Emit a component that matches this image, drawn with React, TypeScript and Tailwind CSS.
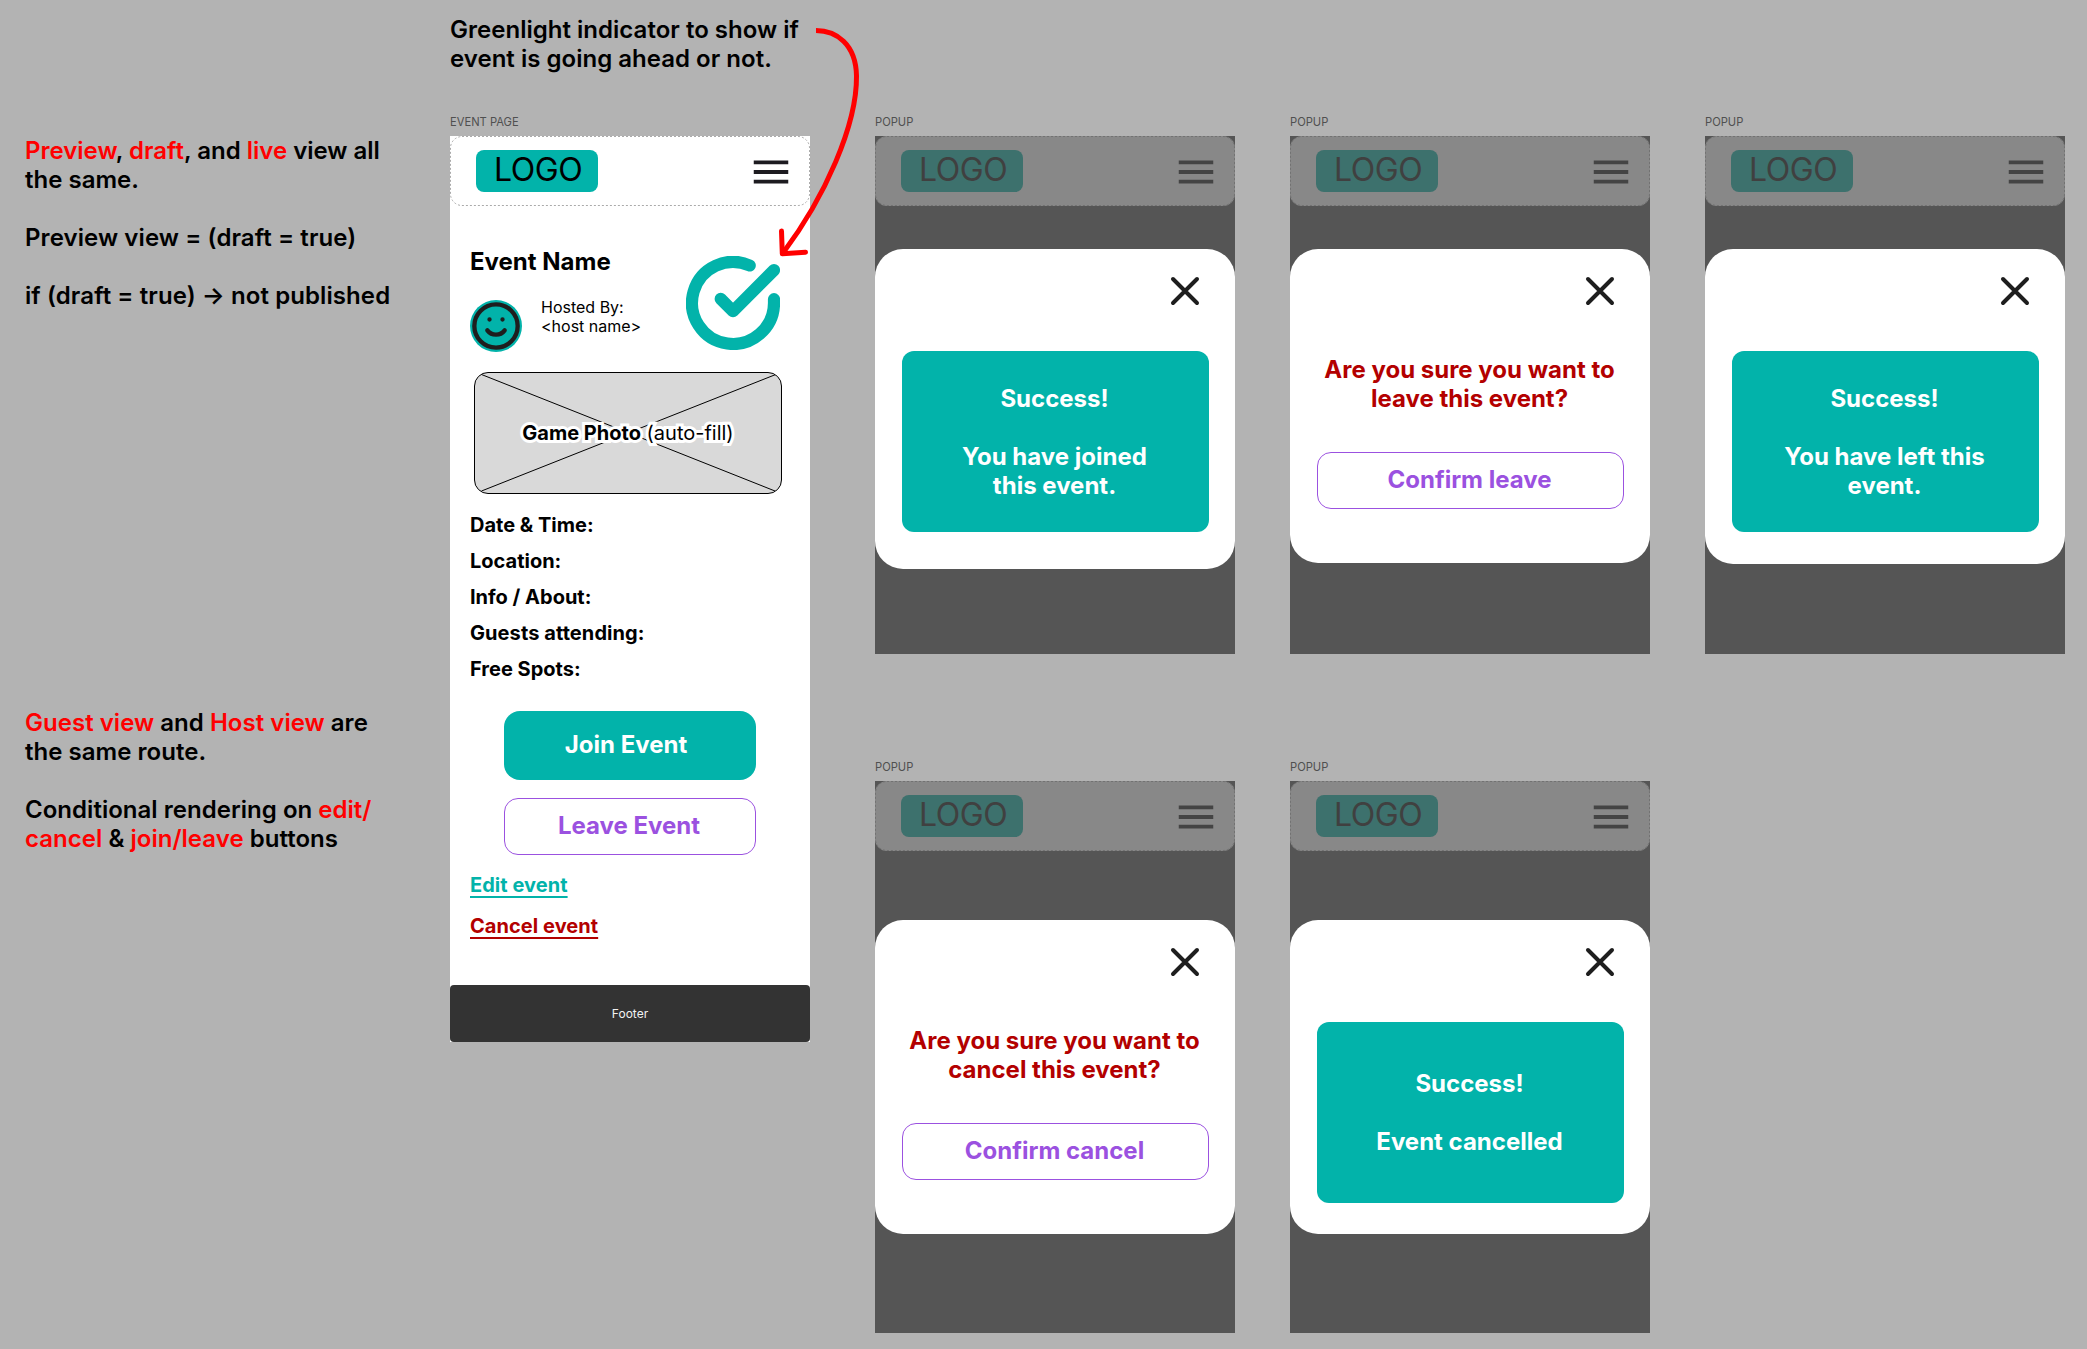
import type { ReactNode } from "react";

function DashedOutline({ className }: { className: string }) {
  return (
    <svg className={`pointer-events-none absolute inset-0 ${className}`} width="360" height="70" fill="none">
      <rect x="0.5" y="0.5" width="359" height="69" rx="11.5" stroke="currentColor" strokeDasharray="2 2" />
    </svg>
  );
}

function NavBar({ dimmed = false }: { dimmed?: boolean }) {
  return (
    <header
      className={`relative flex h-[70px] shrink-0 items-start justify-between rounded-xl pt-[14px] pr-[16px] pl-[26px] ${
        dimmed ? "bg-[#888888] text-[#404040]" : "bg-white text-black"
      }`}
    >
      <DashedOutline className={dimmed ? "text-[#727272]" : "text-[#aaaaaa]"} />
      <div
        className={`flex h-[42px] w-[122px] rounded-lg pl-[18px] text-[32px] leading-[39px] font-normal tracking-[-0.4px] ${
          dimmed ? "bg-[#3d716d]" : "bg-[#02b3aa]"
        }`}
      >
        LOGO
      </div>
      <svg
        className={`-mt-px ${dimmed ? "text-[#444444]" : "text-[#1d1b20]"}`}
        width="46"
        height="46"
        viewBox="0 0 24 24"
        fill="currentColor"
      >
        <path d="M3 18h18v-2H3v2zm0-5h18v-2H3v2zm0-7v2h18V6H3z" />
      </svg>
    </header>
  );
}

function FrameLabel({ children }: { children: ReactNode }) {
  return <div className="h-[22px] pt-px text-[11.2px] leading-[15px] text-[#505050]">{children}</div>;
}

function Red({ children }: { children: ReactNode }) {
  return <span className="text-[#ff0000]">{children}</span>;
}

function CloseIcon() {
  return (
    <svg
      className="mr-[26px] ml-auto block"
      width="48"
      height="48"
      viewBox="0 0 24 24"
      fill="none"
      stroke="#1e1e1e"
      strokeWidth="2"
      strokeLinecap="round"
    >
      <path d="M18 6 6 18M6 6l12 12" />
    </svg>
  );
}

function Popup({ frame, modal, children }: { frame: string; modal: string; children: ReactNode }) {
  return (
    <section className="w-[360px]">
      <FrameLabel>POPUP</FrameLabel>
      <div className={`flex flex-col bg-[#555555] ${frame}`}>
        <NavBar dimmed />
        <div className={`rounded-[28px] bg-white pt-[18px] text-2xl leading-[29px] font-bold ${modal}`}>
          <CloseIcon />
          {children}
        </div>
      </div>
    </section>
  );
}

function SuccessBox({ pad, lines }: { pad: string; lines: string[] }) {
  return (
    <div className={`mt-9 ml-[27px] h-[181px] w-[307px] rounded-xl bg-[#02b3aa] pr-[2px] text-center text-white ${pad}`}>
      <p className="mb-[29px]">Success!</p>
      {lines.map((line) => (
        <p key={line}>{line}</p>
      ))}
    </div>
  );
}

function ConfirmPrompt({ lines, action }: { lines: string[]; action: string }) {
  return (
    <>
      <div className="mt-10 pr-px text-center text-[#b30000]">
        {lines.map((line) => (
          <p key={line}>{line}</p>
        ))}
      </div>
      <button className="mt-[39px] ml-[27px] flex h-[57px] w-[307px] justify-center rounded-[14px] border border-[#9b51e0] pt-[12px] pr-[2px] font-bold text-[#9b51e0]">
        {action}
      </button>
    </>
  );
}

function SmileAvatar() {
  return (
    <div className="size-[52px] rounded-full bg-[#02b3aa]">
      <svg width="52" height="52" viewBox="0 0 24 24" fill="none" stroke="#1e1e1e" strokeWidth="2" strokeLinecap="round">
        <circle cx="12" cy="12" r="10" />
        <path d="M8 14s1.5 2 4 2 4-2 4-2M9 9h.01M15 9h.01" />
      </svg>
    </div>
  );
}

function GoingAheadIcon() {
  return (
    <svg
      width="94"
      height="94"
      viewBox="0 0 94 94"
      fill="none"
      stroke="#02b3aa"
      strokeWidth="12.2"
      strokeLinecap="round"
      strokeLinejoin="round"
    >
      <path d="M88 43.2V47A41 41 0 1 1 63.7 9.5" />
      <path d="M88 14.1 47 55.2 34.7 42.9" />
    </svg>
  );
}

function GamePhoto() {
  return (
    <div className="relative mt-5 ml-6 flex h-[122px] w-[308px] justify-center rounded-[14px] border border-black bg-[#d9d9d9]">
      <svg className="absolute -top-px -left-px" width="308" height="122" stroke="black" fill="none">
        <path d="M7.5 2.5 301 119M301 2.8 7.5 119" />
      </svg>
      <p className="relative mt-[48px] text-[20px] leading-6 whitespace-nowrap [-webkit-text-stroke:6px_white] [paint-order:stroke_fill]">
        <b className="font-bold">Game Photo</b> (auto-fill)
      </p>
    </div>
  );
}

function EventPage() {
  return (
    <div className="flex h-[906px] flex-col bg-white">
      <NavBar />
      <div className="flex">
        <div className="w-[236px] pl-5">
          <h1 className="mt-[41px] text-2xl leading-[29px] font-bold">Event Name</h1>
          <div className="mt-6 flex">
            <SmileAvatar />
            <div className="mt-[-2px] ml-[19px] text-base leading-[19.4px]">
              Hosted By:
              <br />
              &lt;host name&gt;
            </div>
          </div>
        </div>
        <div className="mt-[50px]">
          <GoingAheadIcon />
        </div>
      </div>
      <GamePhoto />
      <ul className="mt-[13px] pl-5 text-[20px] leading-9 font-bold">
        <li>Date &amp; Time:</li>
        <li>Location:</li>
        <li>Info / About:</li>
        <li className="tracking-[0.08px]">Guests attending:</li>
        <li>Free Spots:</li>
      </ul>
      <button className="mt-6 ml-[54px] flex h-[69px] w-[252px] justify-center rounded-2xl bg-[#02b3aa] pt-[19px] pr-[8px] text-2xl leading-[29px] font-bold text-white">
        Join Event
      </button>
      <button className="mt-[18px] ml-[54px] flex h-[57px] w-[252px] justify-center rounded-[14px] border border-[#9b51e0] pt-[12px] pr-[2px] text-2xl leading-[29px] font-bold text-[#9b51e0]">
        Leave Event
      </button>
      <div className="mt-[18px] flex flex-col items-start gap-[17px] pl-5 text-[20px] leading-6 font-bold">
        <a className="tracking-[0.05px] text-[#02b3aa] underline decoration-[1.5px] underline-offset-[4px]">Edit event</a>
        <a className="tracking-[0.05px] text-[#b30000] underline decoration-[1.5px] underline-offset-[4px]">Cancel event</a>
      </div>
      <footer className="mt-auto flex h-[57px] items-center justify-center rounded bg-[#333333] text-xs text-[#f2f2f2]">
        Footer
      </footer>
    </div>
  );
}

export default function App() {
  return (
    <main className="relative flex h-[1349px] w-[2087px] overflow-hidden bg-[#b3b3b3] font-[Inter,sans-serif] text-black">
      <aside className="flex w-[450px] shrink-0 flex-col pt-[136px] pl-[25px] text-2xl leading-[29px] font-semibold whitespace-nowrap">
        <div className="h-[572px]">
          <p>
            <Red>Preview</Red>, <Red>draft</Red>, and <Red>live</Red> view all
            <br />
            the same.
          </p>
          <p className="mt-[29px] tracking-[0.09px]">Preview view = (draft = true)</p>
          <p className="mt-[29px] tracking-[0.09px]">if (draft = true) → not published</p>
        </div>
        <div className="tracking-[0.03px]">
          <p>
            <Red>Guest view</Red> and <Red>Host view</Red> are
            <br />
            the same route.
          </p>
          <p className="mt-[29px]">
            Conditional rendering on <Red>edit/</Red>
            <br />
            <Red>cancel</Red> &amp; <Red>join/leave</Red> buttons
          </p>
        </div>
      </aside>

      <section className="w-[360px] shrink-0 pt-[15px]">
        <p className="mb-[41px] text-2xl leading-[29px] font-semibold tracking-[0.02px] whitespace-nowrap">
          Greenlight indicator to show if
          <br />
          event is going ahead or not.
        </p>
        <FrameLabel>EVENT PAGE</FrameLabel>
        <EventPage />
      </section>

      <div className="ml-[65px] grid grid-cols-[360px_360px_360px] content-start gap-x-[55px] gap-y-[105px] pt-[114px]">
        <Popup frame="h-[518px]" modal="mt-[43px] h-[320px]">
          <SuccessBox pad="pt-[33px]" lines={["You have joined", "this event."]} />
        </Popup>
        <Popup frame="h-[518px]" modal="mt-[43px] h-[314px]">
          <ConfirmPrompt lines={["Are you sure you want to", "leave this event?"]} action="Confirm leave" />
        </Popup>
        <Popup frame="h-[518px]" modal="mt-[43px] h-[315px]">
          <SuccessBox pad="pt-[33px]" lines={["You have left this", "event."]} />
        </Popup>
        <Popup frame="h-[552px]" modal="mt-[69px] h-[314px]">
          <ConfirmPrompt lines={["Are you sure you want to", "cancel this event?"]} action="Confirm cancel" />
        </Popup>
        <Popup frame="h-[552px]" modal="mt-[69px] h-[314px]">
          <SuccessBox pad="pt-[47px]" lines={["Event cancelled"]} />
        </Popup>
      </div>

      {/* Connector from the note to the status icon */}
      <svg
        className="pointer-events-none absolute top-0 left-[770px]"
        width="100"
        height="270"
        viewBox="770 0 100 270"
        fill="none"
        stroke="#ff0000"
        strokeWidth="5"
      >
        <path d="M816 30.5C836 30.5 856 44 856.5 76C857 125 825 197 783 253" />
        <path d="M781.5 231 782.3 253.7 805.5 252.2" strokeLinecap="round" strokeLinejoin="round" />
      </svg>
    </main>
  );
}
